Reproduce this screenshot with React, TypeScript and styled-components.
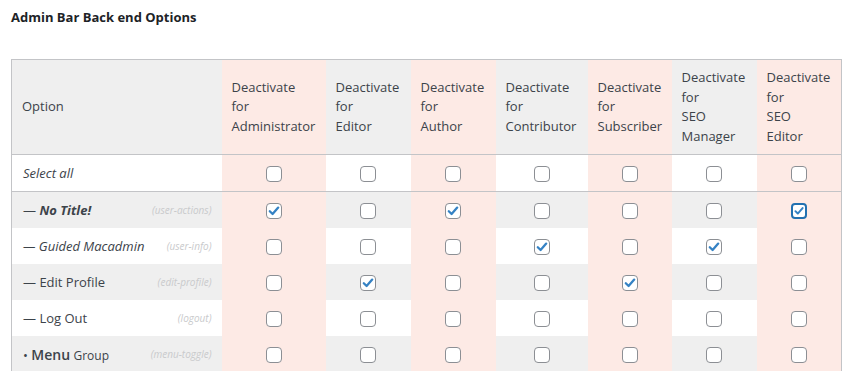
import React from "react";
import styled, { createGlobalStyle, css } from "styled-components";

const GlobalStyle = createGlobalStyle`
  html, body {
    margin: 0;
    padding: 0;
    background: #fff;
  }
  body {
    font-family: "Open Sans", "Noto Sans", sans-serif;
    color: #3c434a;
  }
`;

const PINK = "#fdeae5";
const GREY = "#efefef";
const BORDER = "#c3c4c7";

const Page = styled.div`
  padding: 8px 11px 0;
`;

const Title = styled.h2`
  margin: 0 0 33px;
  font-size: 13px;
  line-height: 18px;
  font-weight: 700;
  color: #1d2327;
`;

const Table = styled.table`
  border-collapse: collapse;
  table-layout: fixed;
  width: 830px;
  border: 1px solid ${BORDER};
  font-size: 13px;
`;

type Tone = "pink" | "grey" | "white";

const toneColor = (t: Tone) => (t === "pink" ? PINK : t === "grey" ? GREY : "#fff");

const HeadCell = styled.th<{ $tone: Tone }>`
  background: ${(p) => toneColor(p.$tone)};
  text-align: left;
  font-weight: 400;
  padding: 0 10px;
  height: 94px;
  line-height: 19.5px;
  vertical-align: middle;
  color: #3c434a;
`;

const HeadRow = styled.tr`
  border-bottom: 1px solid ${BORDER};
`;

const Row = styled.tr<{ $divider?: boolean }>`
  ${(p) =>
    p.$divider &&
    css`
      border-bottom: 1px solid ${BORDER};
    `}
`;

const OptionCell = styled.td<{ $tone: Tone; $h: number }>`
  background: ${(p) => toneColor(p.$tone)};
  height: ${(p) => p.$h}px;
  padding: 0 10px 0 11px;
  vertical-align: middle;
`;

const BoxCell = styled.td<{ $tone: Tone }>`
  background: ${(p) => toneColor(p.$tone)};
  text-align: center;
  vertical-align: middle;
  padding: 0;
`;

const OptionLine = styled.div`
  display: flex;
  align-items: center;
  justify-content: space-between;
  white-space: nowrap;
`;

const Label = styled.span<{ $italic?: boolean; $bold?: boolean }>`
  font-style: ${(p) => (p.$italic ? "italic" : "normal")};
  b {
    font-weight: ${(p) => (p.$bold ? 700 : 400)};
  }
`;

const MenuWord = styled.span`
  font-weight: 600;
  font-size: 14px;
`;

const GroupWord = styled.span`
  font-size: 12px;
`;

const Slug = styled.span`
  font-size: 10px;
  font-style: italic;
  color: #c9cacc;
`;

const Box = styled.span<{ $focus?: boolean }>`
  display: inline-flex;
  align-items: center;
  justify-content: center;
  box-sizing: border-box;
  width: 16px;
  height: 16px;
  border: 1px solid #8c8f94;
  border-radius: 4px;
  background: #fff;
  vertical-align: middle;
  ${(p) =>
    p.$focus &&
    css`
      border: 2px solid #2271b1;
    `}
  svg {
    display: block;
  }
`;

const Checkbox = ({ checked, focus }: { checked?: boolean; focus?: boolean }) => (
  <Box $focus={focus}>
    {checked && (
      <svg width={focus ? 12 : 14} height={focus ? 12 : 14} viewBox="0 0 14 14">
        <path
          d="M2.8 7.2 L5.6 10 L11.2 3.6"
          fill="none"
          stroke="#3582c4"
          strokeWidth="2.3"
          strokeLinecap="round"
          strokeLinejoin="round"
        />
      </svg>
    )}
  </Box>
);

const roles = [
  { name: "Administrator", tone: "pink" as const },
  { name: "Editor", tone: "grey" as const },
  { name: "Author", tone: "pink" as const },
  { name: "Contributor", tone: "grey" as const },
  { name: "Subscriber", tone: "pink" as const },
  { name: "SEO\nManager", tone: "grey" as const },
  { name: "SEO\nEditor", tone: "pink" as const },
];

const widths = [210, 104, 85, 85, 92, 84, 85, 85];

type Item = {
  label: React.ReactNode;
  slug: string;
  checks: number[];
  focus?: number;
};

const items: Item[] = [
  {
    label: (
      <Label $bold>
        — <b><i>No Title!</i></b>
      </Label>
    ),
    slug: "(user-actions)",
    checks: [0, 2, 6],
    focus: 6,
  },
  {
    label: <Label $italic>— Guided Macadmin</Label>,
    slug: "(user-info)",
    checks: [3, 5],
  },
  { label: <Label>— Edit Profile</Label>, slug: "(edit-profile)", checks: [1, 4] },
  { label: <Label>— Log Out</Label>, slug: "(logout)", checks: [] },
  {
    label: (
      <Label>
        • <MenuWord>Menu</MenuWord> <GroupWord>Group</GroupWord>
      </Label>
    ),
    slug: "(menu-toggle)",
    checks: [],
  },
];

const headerLines = (name: string) =>
  ["Deactivate", "for", ...name.split("\n")].map((l, i) => (
    <React.Fragment key={i}>
      {i > 0 && <br />}
      {l}
    </React.Fragment>
  ));

export default function App() {
  return (
    <Page>
      <GlobalStyle />
      <Title>Admin Bar Back end Options</Title>
      <Table>
        <colgroup>
          {widths.map((w, i) => (
            <col key={i} style={{ width: w }} />
          ))}
        </colgroup>
        <thead>
          <HeadRow>
            <HeadCell $tone="grey">Option</HeadCell>
            {roles.map((r) => (
              <HeadCell key={r.name} $tone={r.tone}>
                {headerLines(r.name)}
              </HeadCell>
            ))}
          </HeadRow>
        </thead>
        <tbody>
          <Row $divider>
            <OptionCell $tone="white" $h={36}>
              <Label $italic>Select all</Label>
            </OptionCell>
            {roles.map((r) => (
              <BoxCell key={r.name} $tone={r.tone === "pink" ? "pink" : "white"}>
                <Checkbox />
              </BoxCell>
            ))}
          </Row>
          {items.map((it, ri) => {
            const rowTone: Tone = ri % 2 === 0 ? "grey" : "white";
            return (
              <Row key={it.slug}>
                <OptionCell $tone={rowTone} $h={36}>
                  <OptionLine>
                    {it.label}
                    <Slug>{it.slug}</Slug>
                  </OptionLine>
                </OptionCell>
                {roles.map((r, ci) => (
                  <BoxCell key={r.name} $tone={r.tone === "pink" ? "pink" : rowTone}>
                    <Checkbox checked={it.checks.includes(ci)} focus={it.focus === ci} />
                  </BoxCell>
                ))}
              </Row>
            );
          })}
        </tbody>
      </Table>
    </Page>
  );
}
